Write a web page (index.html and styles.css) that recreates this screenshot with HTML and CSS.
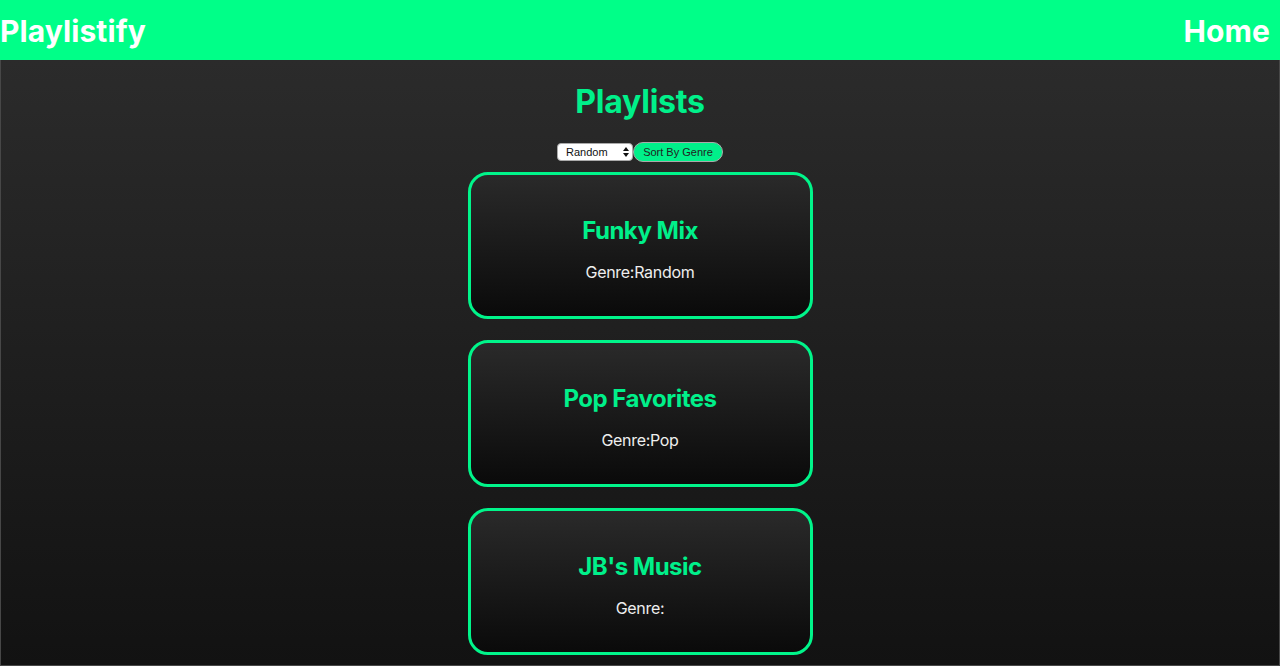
FILE: index.html
```html
<!DOCTYPE html>
<html>
	<head>
		<link rel="stylesheet" href="styles.css">
	</head>
	<body>
		<div class="navbar">
			<span class="brand">Playlistify</span>
			<span class="nav-link">Home</span>
		</div>
		<div class="main">
			<h1>Playlists</h1>
			<div class="sort-row">
				<span class="select-wrap">
					<select class="genre-select">
						<option>Random</option>
						<option>Pop</option>
					</select>
				</span>
				<button class="btn-sort">Sort By Genre</button>
			</div>
			<div class="playlists">
				<div class="playlist">
					<h2>Funky Mix</h2>
					<p>Genre:Random</p>
				</div>
				<div class="playlist">
					<h2>Pop Favorites</h2>
					<p>Genre:Pop</p>
				</div>
				<div class="playlist">
					<h2>JB's Music</h2>
					<p>Genre:</p>
				</div>
			</div>
		</div>
	</body>
</html>
```

FILE: styles.css
```css
html, body {
	margin: 0;
	height: 100%;
}
body {
	font-family: Inter, "Liberation Sans", sans-serif;
	background: #121212;
	overflow: hidden;
}
.navbar {
	height: 60px;
	background: #00ff88;
	display: flex;
	align-items: center;
	justify-content: space-between;
	padding: 2px 10px 0 0;
	box-sizing: border-box;
	color: #fff;
	font-weight: 700;
	font-size: 30px;
	letter-spacing: 0.1px;
}
.main {
	box-sizing: border-box;
	height: calc(100% - 60px);
	border: 1px solid #474747;
	border-top: none;
	background: linear-gradient(#2b2b2b, #121212);
	display: flex;
	flex-direction: column;
	align-items: center;
	padding-top: 22px;
}
h1 {
	margin: 0;
	color: #00f08a;
	font-size: 32px;
	line-height: 39px;
	letter-spacing: -0.2px;
}
.sort-row {
	display: flex;
	align-items: center;
	margin: 21px 0 10px;
}
.select-wrap {
	position: relative;
	display: flex;
	height: 18px;
}
.select-wrap::before, .select-wrap::after {
	content: "";
	position: absolute;
	right: 4px;
	border-left: 3px solid transparent;
	border-right: 3px solid transparent;
	pointer-events: none;
}
.select-wrap::before {
	top: 4px;
	border-bottom: 4px solid #111;
}
.select-wrap::after {
	top: 10px;
	border-top: 4px solid #111;
}
.genre-select {
	-webkit-appearance: none;
	appearance: none;
	width: 76px;
	height: 18px;
	font-family: "Liberation Sans", sans-serif;
	font-size: 11px;
	color: #111;
	border: 1px solid #aaa;
	border-radius: 4px;
	background: #fff;
	padding: 0 0 0 8px;
	outline: none;
}
.btn-sort {
	height: 20px;
	width: 90px;
	border: 1px solid #aaa;
	border-radius: 10px;
	background: #00f08a;
	color: #222;
	font-family: "Liberation Sans", sans-serif;
	font-size: 11px;
	padding: 0;
	cursor: pointer;
}
.playlists {
	display: flex;
	flex-direction: column;
	gap: 21px;
}
.playlist {
	box-sizing: border-box;
	width: 345px;
	height: 147px;
	border: 3px solid #00f58a;
	border-radius: 20px;
	background: linear-gradient(#2a2a2a, #0a0a0a);
	text-align: center;
	padding-top: 41px;
}
.playlist h2 {
	margin: 0 0 18px;
	color: #00f08a;
	font-size: 24px;
	line-height: 29px;
	letter-spacing: -0.5px;
}
.playlist p {
	margin: 0;
	color: #eee;
	font-size: 16px;
	line-height: 19px;
	letter-spacing: -0.3px;
}
```
